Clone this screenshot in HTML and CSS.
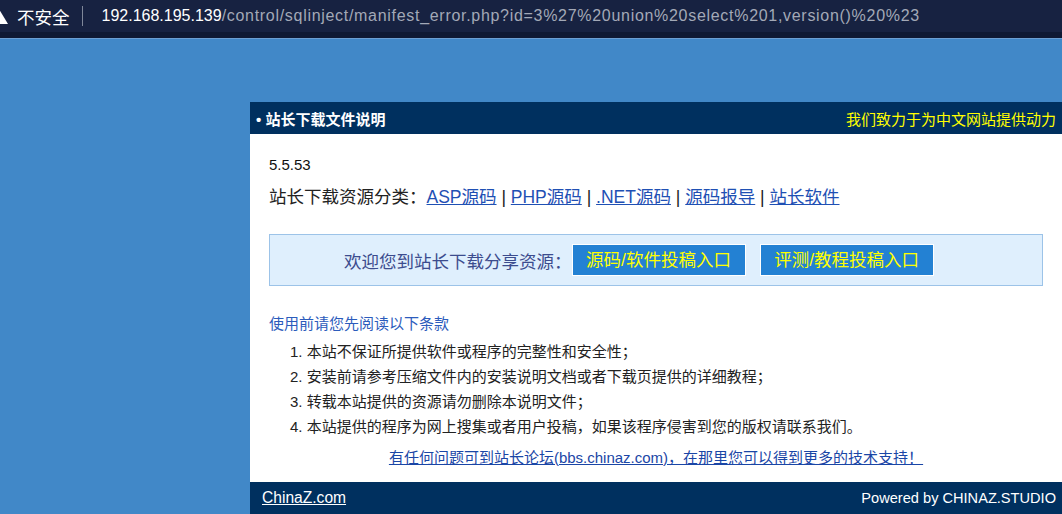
FILE: index.html
```html
<!DOCTYPE html>
<html lang="zh-CN">
<head>
<meta charset="utf-8">
<title>站长下载文件说明</title>
<link rel="stylesheet" href="styles.css">
</head>
<body>
<div class="chrome">
  <svg class="warn" width="8" height="16" viewBox="0 0 8 16"><polygon points="-1,0 8,15 -10,15" fill="#ffffff"/></svg>
  <span class="insecure">不安全</span>
  <span class="sep"></span>
  <span class="url"><span class="host">192.168.195.139</span><span class="path">/control/sqlinject/manifest_error.php?id=3%27%20union%20select%201,version()%20%23</span></span>
</div>
<div class="chrome-strip"></div>
<div class="chrome-line"></div>
<div class="page">
  <div class="panel">
    <div class="panel-head">
      <span class="head-title">• 站长下载文件说明</span>
      <span class="head-slogan">我们致力于为中文网站提供动力</span>
    </div>
    <div class="panel-body">
      <div class="ver">5.5.53</div>
      <div class="cats">站长下载资源分类：<a href="#">ASP源码</a> | <a href="#">PHP源码</a> | <a href="#">.NET源码</a> | <a href="#">源码报导</a> | <a href="#">站长软件</a></div>
      <div class="box">
        <span class="welcome">欢迎您到站长下载分享资源：</span>
        <a class="btn" href="#">源码/软件投稿入口</a>
        <a class="btn" href="#">评测/教程投稿入口</a>
      </div>
      <div class="notice">使用前请您先阅读以下条款</div>
      <div class="terms">
        <div class="term">1. 本站不保证所提供软件或程序的完整性和安全性；</div>
        <div class="term">2. 安装前请参考压缩文件内的安装说明文档或者下载页提供的详细教程；</div>
        <div class="term">3. 转载本站提供的资源请勿删除本说明文件；</div>
        <div class="term">4. 本站提供的程序为网上搜集或者用户投稿，如果该程序侵害到您的版权请联系我们。</div>
      </div>
      <div class="support"><a href="#">有任何问题可到站长论坛(bbs.chinaz.com)，在那里您可以得到更多的技术支持！</a></div>
    </div>
    <div class="panel-foot">
      <a class="foot-link" href="#">ChinaZ.com</a>
      <span class="powered">Powered by CHINAZ.STUDIO</span>
    </div>
  </div>
</div>
</body>
</html>
```

FILE: styles.css
```css
html, body {
  margin: 0;
  padding: 0;
}
body {
  background: #4188c8;
  font-family: "Liberation Sans", "Noto Sans CJK SC", sans-serif;
  overflow: hidden;
  width: 1062px;
  height: 514px;
}
.chrome {
  height: 32px;
  background: #172241;
  display: flex;
  align-items: center;
  white-space: nowrap;
  font-size: 16px;
}
.warn {
  display: block;
  margin-top: 1px;
  flex: none;
}
.insecure {
  color: #ffffff;
  font-size: 17.5px;
  margin-left: 9px;
}
.sep {
  width: 1px;
  height: 20px;
  background: #7f8799;
  margin-left: 12px;
  margin-right: 19px;
}
.url {
  color: #a3a9b7;
}
.host {
  color: #ffffff;
}
.path {
  letter-spacing: 0.7px;
}
.chrome-strip {
  height: 6px;
  background: #0f1933;
}
.chrome-line {
  height: 1px;
  background: #6c9fd2;
}
.page {
  padding-top: 63px;
  padding-left: 250px;
}
.panel {
  width: 812px;
}
.panel-head {
  height: 32px;
  background: #00305f;
  display: flex;
  align-items: center;
  justify-content: space-between;
  padding: 0 6px;
}
.head-title {
  color: #ffffff;
  font-weight: bold;
  font-size: 15px;
}
.head-slogan {
  color: #ffff00;
  font-size: 15px;
}
.panel-body {
  background: #ffffff;
  padding: 20px 19px 12px;
}
.ver {
  font-size: 15px;
  line-height: 22px;
  color: #111111;
}
.cats {
  margin-top: 8px;
  font-size: 17.5px;
  line-height: 26px;
  color: #222222;
}
.cats a {
  color: #1f50b4;
}
.box {
  margin-top: 24px;
  height: 50px;
  border: 1px solid #9cc3e8;
  background: #dfeffd;
  display: flex;
  align-items: center;
  padding-left: 74px;
}
.welcome {
  color: #3c4c8e;
  font-size: 17.5px;
}
.btn {
  display: block;
  height: 30px;
  line-height: 30px;
  padding: 0 13.6px;
  background: #2381d3;
  border: 1px solid #ffffff;
  color: #ffff00;
  font-size: 17.5px;
  text-decoration: none;
  margin-right: 14px;
}
.notice {
  margin-top: 28px;
  font-size: 15px;
  line-height: 20px;
  color: #2c5cbc;
}
.terms {
  margin-top: 5px;
  padding-left: 21px;
}
.term {
  font-size: 15px;
  line-height: 25px;
  color: #222222;
}
.support {
  margin-top: 7px;
  text-align: center;
  font-size: 15px;
  line-height: 24px;
}
.support a {
  color: #1a46a6;
}
.panel-foot {
  height: 32px;
  background: #00305f;
  display: flex;
  align-items: center;
  justify-content: space-between;
  padding: 0 6px 0 12px;
}
.foot-link {
  color: #ffffff;
  font-size: 15.6px;
}
.powered {
  color: #ffffff;
  font-size: 14.6px;
}
```
